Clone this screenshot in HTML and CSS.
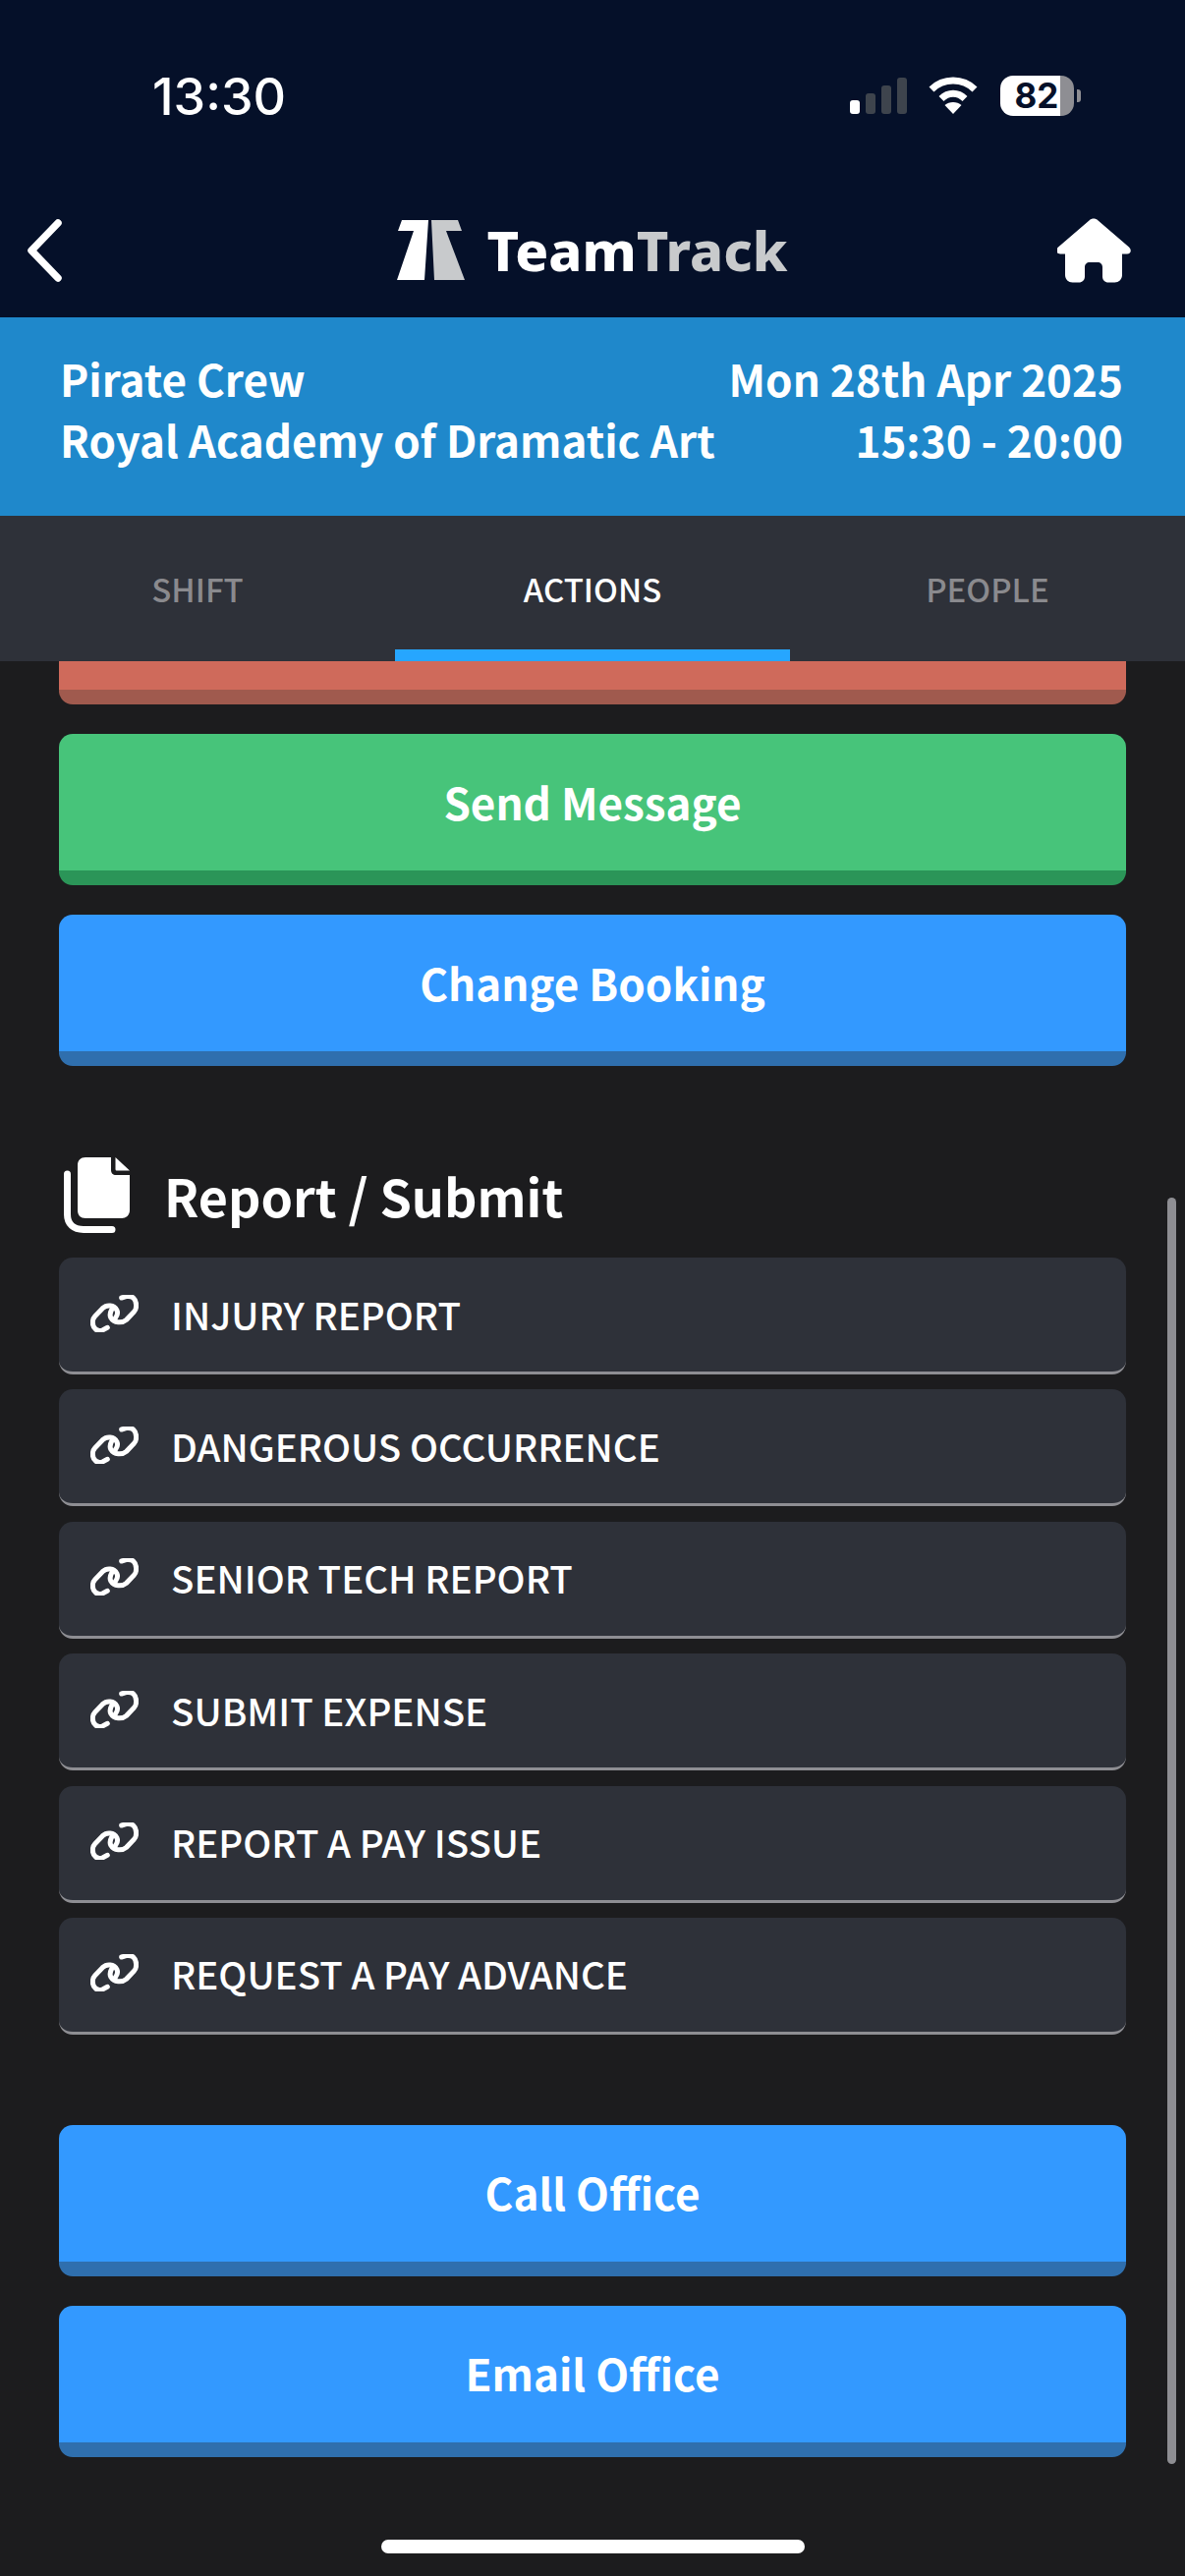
FILE: index.html
```html
<!DOCTYPE html>
<html lang="en">
<head>
    <meta charset="UTF-8">
    <meta name="viewport" content="width=device-width, initial-scale=1.0">
    <title>TeamTrack - Actions</title>
    <link rel="stylesheet" href="styles.css">
</head>
<body>
    <div class="top">
        <div class="status-bar">
            <span class="time">13:30</span>
            <div class="status-icons">
                <div class="signal">
                    <i class="bar bar-1"></i>
                    <i class="bar bar-2"></i>
                    <i class="bar bar-3"></i>
                    <i class="bar bar-4"></i>
                </div>
                <svg class="wifi" viewBox="0 0 50 38">
                    <path d="M3 13 C15 1 35 1 47 13" fill="none" stroke="#fff" stroke-width="7"/>
                    <path d="M13 22.500 C20 15.500 30 15.500 37 22.500" fill="none" stroke="#fff" stroke-width="7"/>
                    <path d="M16.500 29 C21 25 29 25 33.500 29 L25 38 Z" fill="#fff"/>
                </svg>
                <div class="battery">
                    <span class="battery-level">82</span>
                </div>
                <i class="battery-tip"></i>
            </div>
        </div>
        <div class="nav-bar">
            <svg class="back" viewBox="0 0 36 64">
                <path d="M32 4 L5 32 L32 60" fill="none" stroke="#fff" stroke-width="7.500" stroke-linecap="round" stroke-linejoin="round"/>
            </svg>
            <div class="logo">
                <svg class="logo-mark" viewBox="0 0 70 62">
                    <path d="M5 0 H32 L28 61 H0 L17 11 H1 Z" fill="#fff"/>
                    <path d="M35 0 H62 L66 11 H50 L69 61 H38 Z" fill="#c8cacc"/>
                </svg>
                <span class="logo-text">Team<span class="logo-grey">Track</span></span>
            </div>
            <svg class="home" viewBox="0 0 76 66">
                <path d="M37 .5 C38.500 .5 40 1 41 2 L73 29.500 C76 32.500 75 36.500 71 36.500 H66 V58 C66 62.500 62.500 65.500 58.500 65.500 H52 C48.500 65.500 46 63 46 59.500 V50 C46 47 44 45 41 45 H33 C30 45 28 47 28 50 V59.500 C28 63 25.500 65.500 22 65.500 H15.500 C11.500 65.500 8 62.500 8 58 V36.500 H3 C-1 36.500 -2 32.500 1 29.500 L33 2 C34 1 35.500 .5 37 .5 Z" fill="#fff"/>
            </svg>
        </div>
    </div>

    <div class="shift-info">
        <div class="shift-row">
            <span>Pirate Crew</span>
            <span>Mon 28th Apr 2025</span>
        </div>
        <div class="shift-row">
            <span>Royal Academy of Dramatic Art</span>
            <span>15:30 - 20:00</span>
        </div>
    </div>

    <div class="tabs">
        <div class="tab">SHIFT</div>
        <div class="tab tab-active">ACTIONS</div>
        <div class="tab">PEOPLE</div>
    </div>

    <div class="content">
        <div class="btn-cut"></div>
        <div class="btn btn-green">Send Message</div>
        <div class="btn btn-blue">Change Booking</div>

        <div class="section-title">
            <svg class="copy-icon" viewBox="0 0 68 78">
                <path d="M22 0 H48 V13 C48 16 50 18 53 18 H67 V54 C67 59 63 62 59 62 H22 C17 62 14 59 14 54 V8 C14 3 17 0 22 0 Z" fill="#fff"/>
                <path d="M52.500 0 L67 13.500 H54 C53 13.500 52.500 13 52.500 12 Z" fill="#fff"/>
                <path d="M3.500 17 V58 C3.500 68 10 73.500 20 73.500 H49" fill="none" stroke="#fff" stroke-width="7" stroke-linecap="round"/>
            </svg>
            <h2>Report / Submit</h2>
        </div>

        <div class="link-list">
            <div class="link-item"><svg class="link-icon" viewBox="128 118 147 114"><use href="#chain"/></svg>INJURY REPORT</div>
            <div class="link-item"><svg class="link-icon" viewBox="128 118 147 114"><use href="#chain"/></svg>DANGEROUS OCCURRENCE</div>
            <div class="link-item"><svg class="link-icon" viewBox="128 118 147 114"><use href="#chain"/></svg>SENIOR TECH REPORT</div>
            <div class="link-item"><svg class="link-icon" viewBox="128 118 147 114"><use href="#chain"/></svg>SUBMIT EXPENSE</div>
            <div class="link-item"><svg class="link-icon" viewBox="128 118 147 114"><use href="#chain"/></svg>REPORT A PAY ISSUE</div>
            <div class="link-item"><svg class="link-icon" viewBox="128 118 147 114"><use href="#chain"/></svg>REQUEST A PAY ADVANCE</div>
        </div>

        <div class="btn btn-blue btn-office">Call Office</div>
        <div class="btn btn-blue">Email Office</div>

        <div class="scrollbar"></div>
        <div class="home-indicator"></div>
    </div>

    <svg class="defs" width="0" height="0">
        <g id="chain" fill="none" stroke="#fff" stroke-width="15" stroke-linecap="round">
            <path d="M180 218 L166 225 C150 232 135 221 135 203 C135 195 137 188 142 183 L165 159 C178 147 200 148 209 165 C212 172 211 180 205 188"/>
            <path d="M223 127 L237 123 C255 119 268 130 268 150 C268 158 266 165 261 170 L238 194 C225 205 200 205 190 187 C187 180 188 172 193 163"/>
        </g>
    </svg>
</body>
</html>
```

FILE: styles.css
```css
* {
    box-sizing: border-box;
}
body {
    margin: 0;
    width: 1206px;
    height: 2622px;
    display: flex;
    flex-direction: column;
    overflow: hidden;
    background-color: #1c1c1e;
    color: #fff;
    font-family: "Noto Sans CJK JP", "Noto Sans", sans-serif;
}
.top {
    height: 323px;
    background-color: #051029;
}
.status-bar {
    height: 222px;
    display: flex;
    justify-content: space-between;
    padding: 66px 106px 0 155px;
}
.time {
    font-family: Inter, sans-serif;
    font-size: 52px;
    font-weight: 500;
    line-height: 66px;
}
.status-icons {
    display: flex;
    align-items: flex-start;
    padding-top: 11px;
}
.signal {
    display: flex;
    align-items: flex-end;
    gap: 6px;
    height: 37px;
    margin-top: 2px;
}
.bar {
    width: 10px;
    border-radius: 3px;
    background-color: #3e444d;
}
.bar-1 { height: 14px; background-color: #fff; }
.bar-2 { height: 21px; }
.bar-3 { height: 29px; }
.bar-4 { height: 37px; }
.wifi {
    width: 50px;
    height: 38px;
    margin: 1px 23px 0 22px;
}
.battery {
    width: 75px;
    height: 41px;
    border-radius: 13px;
    overflow: hidden;
    background: linear-gradient(to right, #fff 61px, #8e8e93 61px);
}
.battery-level {
    display: block;
    width: 74px;
    color: #051029;
    font-family: Inter, sans-serif;
    font-size: 35px;
    font-weight: 700;
    line-height: 41px;
    text-align: center;
}
.battery-tip {
    width: 4px;
    height: 13px;
    margin: 14px 0 0 3px;
    border-radius: 0 3px 3px 0;
    background-color: #8e8e93;
}
.nav-bar {
    display: flex;
    justify-content: space-between;
    align-items: center;
    height: 70px;
    margin-top: -2px;
    padding: 0 54px 0 27px;
}
.back {
    width: 36px;
    height: 64px;
}
.logo {
    display: flex;
    align-items: center;
    gap: 22px;
    margin-left: 66px;
}
.logo-mark {
    width: 70px;
    height: 62px;
}
.logo-text {
    padding-bottom: 2px;
    font-family: "Noto Sans", sans-serif;
    font-size: 56px;
    font-weight: 800;
    line-height: 62px;
}
.logo-grey {
    color: #c8cacc;
}
.home {
    width: 76px;
    height: 66px;
}
.shift-info {
    height: 202px;
    padding: 31px 63px 0 61px;
    background-color: #1f88cb;
    font-size: 44px;
    font-weight: 700;
    line-height: 62px;
}
.shift-row {
    display: flex;
    justify-content: space-between;
}
.tabs {
    height: 148px;
    display: flex;
    background-color: #2e3139;
}
.tab {
    flex: 1;
    padding-top: 47px;
    color: #8a8a8e;
    font-size: 33px;
    font-weight: 500;
    line-height: 54px;
    text-align: center;
}
.tab-active {
    color: #fff;
    border-bottom: 12px solid #26a6ff;
}
.content {
    position: relative;
    flex: 1;
    padding: 0 60px;
}
.btn-cut {
    height: 44px;
    border-radius: 0 0 14px 14px;
    border-bottom: 15px solid #a05a4e;
    background-color: #cf6a5b;
}
.btn {
    height: 154px;
    margin-top: 30px;
    padding-bottom: 2px;
    display: flex;
    align-items: center;
    justify-content: center;
    border-radius: 14px;
    border-bottom: 15px solid;
    font-size: 44px;
    font-weight: 700;
}
.btn-green {
    background-color: #47c47a;
    border-bottom-color: #2b9558;
}
.btn-blue {
    background-color: #3399ff;
    border-bottom-color: #2f6fae;
}
.btn-office {
    margin-top: 92px;
}
.section-title {
    display: flex;
    align-items: center;
    height: 78px;
    margin-top: 93px;
    padding-left: 5px;
}
.copy-icon {
    width: 68px;
    height: 78px;
}
.section-title h2 {
    margin: 0 0 0 34px;
    font-size: 52px;
    font-weight: 700;
    line-height: 78px;
}
.link-list {
    display: flex;
    flex-direction: column;
    gap: 15.4px;
    margin-top: 24px;
}
.link-item {
    height: 119px;
    display: flex;
    align-items: center;
    padding: 0 32px 3px;
    border-radius: 14px;
    border-bottom: 3px solid #8e8e93;
    background-color: #2e3139;
    font-size: 38.5px;
    font-weight: 500;
}
.link-icon {
    width: 49px;
    height: 38px;
    margin-right: 33px;
}
.scrollbar {
    position: absolute;
    top: 546px;
    right: 9px;
    width: 9px;
    height: 1289px;
    border-radius: 5px;
    background-color: #8e8e93;
}
.home-indicator {
    position: absolute;
    left: 388px;
    top: 1912px;
    width: 431px;
    height: 14px;
    border-radius: 7px;
    background-color: #fff;
}
.defs {
    position: absolute;
}
```
